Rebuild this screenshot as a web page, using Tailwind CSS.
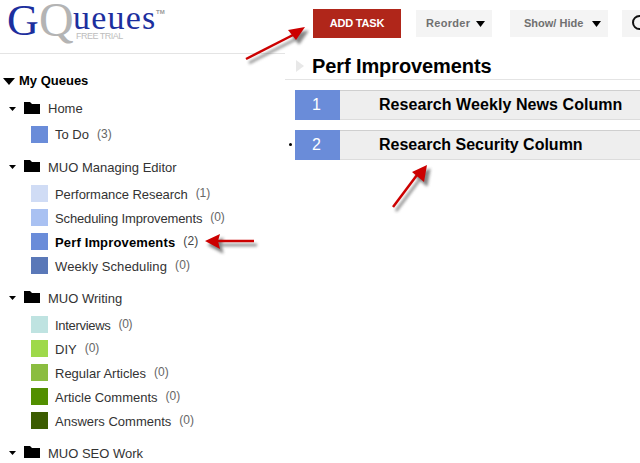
<!DOCTYPE html>
<html lang="en">
<head>
  <meta charset="UTF-8">
  <title>GQueues</title>
  <script src="https://cdn.jsdelivr.net/npm/@tailwindcss/browser@4"></script>
</head>
<body class="bg-white overflow-hidden font-['Liberation_Sans',Arial,sans-serif]">
<div class="relative w-[640px] h-[463px] overflow-hidden flex">

  <!-- left column -->
  <div class="w-[285px] shrink-0">
    <div class="relative h-[54px] border-b border-[#e4e4e4] font-['Liberation_Serif',serif] leading-none whitespace-nowrap">
      <span class="absolute left-[7px] top-[3px] text-[44px] leading-[36px] text-[#1c2f9e]">G</span>
      <span class="absolute left-[39px] top-0 text-[48px] leading-[40px] text-[#b4b4b4]">Q</span>
      <span class="absolute left-[73px] top-[4px] text-[34px] leading-[28px] tracking-[1.2px] text-[#1c2f9e]">ueues</span>
      <span class="absolute left-[156px] top-[9px] text-[6px] font-['Liberation_Sans',sans-serif] font-bold text-[#999]">TM</span>
      <span class="absolute left-[76px] top-[32px] text-[9px] font-['Liberation_Sans',sans-serif] tracking-[-0.5px] text-[#bdbdbd]">FREE TRIAL</span>
    </div>

    <div class="flex items-center h-[18px] mt-[18px] pl-[3px] text-[13px] font-bold text-black">
      <svg class="w-[12px] h-[7px] mr-[4px]" viewBox="0 0 12 7"><path d="M0 0h12L6 7z"/></svg>
      My Queues
    </div>

    <div class="flex items-center h-[18px] mt-[10px] pl-[9px] text-[13px] text-[#333]">
      <svg class="w-[7px] h-[4px] mr-[8px]" viewBox="0 0 7 4"><path d="M0 0h7L3.500 4z"/></svg>
      <svg class="w-[16px] h-[12px] mr-[8px] mb-[3px]" viewBox="0 0 16 12"><path d="M0 0h6l2 2h8v10H0z"/></svg>
      Home
    </div>
    <div class="flex flex-col gap-[7px] mt-[8px]">
      <div class="flex items-center h-[17px] pl-[31px] text-[13px] text-[#333]"><span class="w-[17px] h-[17px] bg-[#6a8cd9] mr-[7px]"></span>To Do<span class="text-[12px] text-[#666] ml-[8px] mb-[2px]">(3)</span></div>
    </div>

    <div class="flex items-center h-[18px] mt-[15px] pl-[9px] text-[13px] text-[#333]">
      <svg class="w-[7px] h-[4px] mr-[8px]" viewBox="0 0 7 4"><path d="M0 0h7L3.500 4z"/></svg>
      <svg class="w-[16px] h-[12px] mr-[8px] mb-[3px]" viewBox="0 0 16 12"><path d="M0 0h6l2 2h8v10H0z"/></svg>
      <span class="mt-[2px]">MUO Managing Editor</span>
    </div>
    <div class="flex flex-col gap-[7px] mt-[9px]">
      <div class="flex items-center h-[17px] pl-[31px] text-[13px] tracking-[-0.05px] text-[#333]"><span class="w-[17px] h-[17px] bg-[#d0dcf5] mr-[7px]"></span><span class="mt-[2px]">Performance Research</span><span class="text-[12px] text-[#666] ml-[8px] mb-[2px]">(1)</span></div>
      <div class="flex items-center h-[17px] pl-[31px] text-[13px] tracking-[-0.13px] text-[#333]"><span class="w-[17px] h-[17px] bg-[#a9c1f2] mr-[7px]"></span><span class="mt-[2px]">Scheduling Improvements</span><span class="text-[12px] text-[#666] ml-[8px] mb-[2px]">(0)</span></div>
      <div class="flex items-center h-[17px] pl-[31px] text-[13px] tracking-[0.15px] font-bold text-black"><span class="w-[17px] h-[17px] bg-[#6a8cd9] mr-[7px]"></span><span class="mt-[2px]">Perf Improvements</span><span class="text-[12px] font-normal text-[#444] ml-[8px] mb-[2px]">(2)</span></div>
      <div class="flex items-center h-[17px] pl-[31px] text-[13px] tracking-[0.1px] text-[#333]"><span class="w-[17px] h-[17px] bg-[#5a78b8] mr-[7px]"></span><span class="mt-[2px]">Weekly Scheduling</span><span class="text-[12px] text-[#666] ml-[8px] mb-[2px]">(0)</span></div>
    </div>

    <div class="flex items-center h-[18px] mt-[15px] pl-[9px] text-[13px] text-[#333]">
      <svg class="w-[7px] h-[4px] mr-[8px]" viewBox="0 0 7 4"><path d="M0 0h7L3.500 4z"/></svg>
      <svg class="w-[16px] h-[12px] mr-[8px] mb-[3px]" viewBox="0 0 16 12"><path d="M0 0h6l2 2h8v10H0z"/></svg>
      <span class="mt-[2px]">MUO Writing</span>
    </div>
    <div class="flex flex-col gap-[7px] mt-[9px]">
      <div class="flex items-center h-[17px] pl-[31px] text-[13px] tracking-[-0.3px] text-[#333]"><span class="w-[17px] h-[17px] bg-[#bfe3e1] mr-[7px]"></span><span class="mt-[2px]">Interviews</span><span class="text-[12px] text-[#666] ml-[8px] mb-[2px]">(0)</span></div>
      <div class="flex items-center h-[17px] pl-[31px] text-[13px] text-[#333]"><span class="w-[17px] h-[17px] bg-[#9ed94a] mr-[7px]"></span><span class="mt-[2px]">DIY</span><span class="text-[12px] text-[#666] ml-[8px] mb-[2px]">(0)</span></div>
      <div class="flex items-center h-[17px] pl-[31px] text-[13px] text-[#333]"><span class="w-[17px] h-[17px] bg-[#8bbd40] mr-[7px]"></span><span class="mt-[2px]">Regular Articles</span><span class="text-[12px] text-[#666] ml-[8px] mb-[2px]">(0)</span></div>
      <div class="flex items-center h-[17px] pl-[31px] text-[13px] text-[#333]"><span class="w-[17px] h-[17px] bg-[#528f00] mr-[7px]"></span><span class="mt-[2px]">Article Comments</span><span class="text-[12px] text-[#666] ml-[8px] mb-[2px]">(0)</span></div>
      <div class="flex items-center h-[17px] pl-[31px] text-[13px] text-[#333]"><span class="w-[17px] h-[17px] bg-[#3c5c00] mr-[7px]"></span><span class="mt-[2px]">Answers Comments</span><span class="text-[12px] text-[#666] ml-[8px] mb-[2px]">(0)</span></div>
    </div>

    <div class="flex items-center h-[18px] mt-[15px] pl-[9px] text-[13px] text-[#333]">
      <svg class="w-[7px] h-[4px] mr-[8px]" viewBox="0 0 7 4"><path d="M0 0h7L3.500 4z"/></svg>
      <svg class="w-[16px] h-[12px] mr-[8px] mb-[3px]" viewBox="0 0 16 12"><path d="M0 0h6l2 2h8v10H0z"/></svg>
      <span class="mt-[2px]">MUO SEO Work</span>
    </div>
  </div>

  <!-- right column -->
  <div class="flex-1 min-w-0">
    <div class="flex items-center h-[47px] pl-[28px]">
      <button class="shrink-0 w-[88px] h-[29px] bg-[#b0261a] text-white text-[11px] font-bold tracking-[-0.2px] mr-[15px]">ADD TASK</button>
      <button class="shrink-0 flex items-center gap-[6px] pl-[10px] w-[76px] h-[27px] bg-[#f4f4f4] text-[#707070] text-[11px] font-bold tracking-[0.3px] mr-[18px]">Reorder
        <svg class="w-[9px] h-[6px]" viewBox="0 0 9 6"><path d="M0 0h9L4.500 6z"/></svg></button>
      <button class="shrink-0 flex items-center gap-[9px] pl-[14px] w-[98px] h-[27px] bg-[#f4f4f4] text-[#707070] text-[11px] font-bold mr-[14px]">Show/ Hide
        <svg class="w-[9px] h-[6px]" viewBox="0 0 9 6"><path d="M0 0h9L4.500 6z"/></svg></button>
      <div class="flex items-center w-[30px] h-[27px] shrink-0 bg-[#f4f4f4] pl-[10px]">
        <svg class="w-[20px] h-[20px] shrink-0 mt-[3px]" viewBox="0 0 20 20" fill="none" stroke="#111" stroke-width="2"><circle cx="7.500" cy="7.500" r="6.500"/><path d="M12 12l6 6"/></svg>
      </div>
    </div>

    <div class="flex items-center h-[33px] border-b border-[#e4e4e4] pl-[11px] pt-[6px]">
      <svg class="w-[8px] h-[12px] mr-[8px]" viewBox="0 0 8 12"><path d="M0 0l8 6L0 12z" fill="#e8e8e8"/></svg>
      <h1 class="text-[20px] font-bold tracking-[-0.1px] text-black leading-none">Perf Improvements</h1>
    </div>

    <div class="flex flex-col gap-[10px] mt-[10px] ml-[10px]">
      <div class="flex h-[30px] bg-[#eeeeee] border-t border-t-[#cfcfcf] border-b border-b-[#dcdcdc]">
        <div class="w-[45px] bg-[#6a8cd9] text-white text-[16px] pr-[2px] flex items-center justify-center mt-[-1px] mb-[-1px]">1</div>
        <div class="pl-[39px] text-[16px] tracking-[0.07px] font-bold text-black flex items-center">Research Weekly News Column</div>
      </div>
      <div class="relative flex h-[30px] bg-[#eeeeee] border-t border-t-[#cfcfcf] border-b border-b-[#dcdcdc]">
        <span class="absolute left-[-6px] top-[12px] w-[3px] h-[3px] rounded-full bg-black"></span>
        <div class="w-[45px] bg-[#6a8cd9] text-white text-[16px] pr-[2px] flex items-center justify-center mt-[-1px] mb-[-1px]">2</div>
        <div class="pl-[39px] text-[16px] font-bold text-black flex items-center">Research Security Column</div>
      </div>
    </div>
  </div>

  <!-- annotation arrows -->
  <svg class="absolute left-0 top-0 w-[640px] h-[463px] pointer-events-none" viewBox="0 0 640 463">
    <defs>
      <filter id="blur" x="-30%" y="-30%" width="160%" height="160%"><feGaussianBlur stdDeviation="1.800"/></filter>
    </defs>
    <g fill="#666" stroke="#666" filter="url(#blur)" transform="translate(3 4)" opacity="0.8">
      <path d="M246 59L293 35" stroke-width="2.500"/><path d="M305 27L296 40L288 30z"/>
      <path d="M254 241L218 241" stroke-width="2.500"/><path d="M205 241L220 234L218 241L220 249z"/>
      <path d="M393 207L417 175" stroke-width="2.500"/><path d="M427 165L424 182L412 172z"/>
    </g>
    <g fill="#c00" stroke="#c00">
      <path d="M246 59L293 35" stroke-width="2.500" fill="none"/><path d="M305 27L296 40L288 30z" stroke="none"/>
      <path d="M254 241L218 241" stroke-width="2.500" fill="none"/><path d="M205 241L220 234L218 241L220 249z" stroke="none"/>
      <path d="M393 207L417 175" stroke-width="2.500" fill="none"/><path d="M427 165L424 182L412 172z" stroke="none"/>
    </g>
  </svg>
</div>
</body>
</html>
